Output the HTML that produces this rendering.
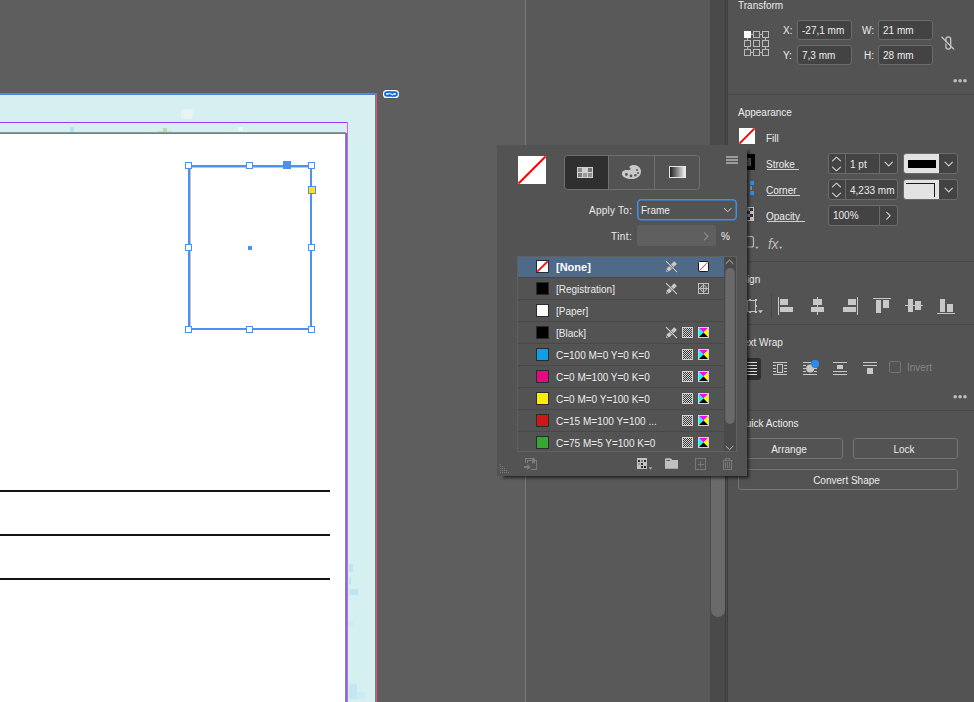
<!DOCTYPE html>
<html lang="en">
<head>
<meta charset="utf-8">
<title>InDesign – Swatches</title>
<style>
*{box-sizing:border-box;margin:0;padding:0}
html,body{width:974px;height:702px;overflow:hidden}
body{position:relative;background:#5e5e5e;font-family:"Liberation Sans",sans-serif;font-size:10px;color:#ececec;line-height:12px}
.abs{position:absolute}
.t{position:absolute;white-space:nowrap;line-height:12px;height:12px}
svg{position:absolute;overflow:visible}
/* canvas */
#bleed{left:0;top:95px;width:375px;height:607px;background:#d6eff0}
#page{left:0;top:134px;width:345px;height:568px;background:#fff}
.h{position:absolute;width:7px;height:7px;background:#fff;border:1px solid #4a90f5}
/* dock */
#dock{left:526px;top:0;width:184px;height:702px;background:#595959}
#track{left:710px;top:0;width:15px;height:702px;background:#4a4a4a}
#thumb{left:711px;top:150px;width:14px;height:467px;background:#6a6a6a;border-radius:0 0 7px 7px}
/* right panel */
#panel{left:728px;top:0;width:246px;height:702px;background:#535353}
.sep{position:absolute;left:728px;width:246px;height:1px;background:#484848}
.fld{position:absolute;background:#434343;border:1px solid #6b6b6b;border-radius:3px}
.btn{position:absolute;padding-right:3px;border:1px solid #747474;border-radius:3px;text-align:center;line-height:21px;height:21px}
.u{text-decoration:none}
.ul{position:absolute;height:1px;background:#d0d0d0}
/* popup */
#pop{left:497px;top:145px;width:250px;height:331px;background:#535353;box-shadow:4px 4px 3px -2px rgba(0,0,0,.62)}
.row{position:absolute;left:518px;width:206px;height:22px;border-bottom:1px solid #484848}
.sw{position:absolute;left:536px;width:13px;height:13px;border:1px solid #2b2b2b}
</style>
</head>
<body>
<!-- ================= CANVAS ================= -->
<div class="abs" id="bleed"></div>
<div class="abs" style="left:0;top:93px;width:377px;height:1px;background:#f0506a"></div>
<div class="abs" style="left:0;top:94px;width:376px;height:1px;background:#4a86e0"></div>
<div class="abs" style="left:375px;top:94px;width:1px;height:608px;background:#6f7f86"></div>
<div class="abs" style="left:376px;top:93px;width:1px;height:609px;background:#f0506a"></div>
<div class="abs" style="left:0;top:122px;width:348px;height:1px;background:#9a3cf2"></div>
<div class="abs" style="left:347px;top:122px;width:1px;height:580px;background:#f54cf5"></div>
<div class="abs" style="left:0;top:132px;width:346px;height:1px;background:#8c9a9c"></div>
<div class="abs" style="left:0;top:133px;width:347px;height:1px;background:#4a86e0"></div>
<div class="abs" style="left:346px;top:133px;width:1px;height:569px;background:#4a86e0"></div>
<div class="abs" id="page"></div>
<div class="abs" style="left:345px;top:134px;width:1px;height:568px;background:#8a8a8a"></div>
<!-- faint preview artefacts in bleed area -->
<div class="abs" style="left:181px;top:109px;width:12px;height:10px;background:#e6f5f4;border-radius:3px"></div>
<div class="abs" style="left:70px;top:127px;width:4px;height:5px;background:#b9e0ef"></div>
<div class="abs" style="left:157px;top:131px;width:15px;height:1px;background:#c6e0d2"></div>
<div class="abs" style="left:163px;top:128px;width:4px;height:4px;background:#bad6ba"></div>
<div class="abs" style="left:238px;top:127px;width:5px;height:4px;background:#ecf8f7"></div>
<div class="abs" style="left:349px;top:564px;width:4px;height:8px;background:#bfe3f2"></div>
<div class="abs" style="left:349px;top:577px;width:2px;height:7px;background:#bfe3f2"></div>
<div class="abs" style="left:349px;top:589px;width:9px;height:6px;background:#c2e5f2"></div>
<div class="abs" style="left:349px;top:622px;width:4px;height:5px;background:#cdebf3"></div>
<div class="abs" style="left:349px;top:684px;width:8px;height:15px;background:#c4e6f3"></div>
<div class="abs" style="left:357px;top:692px;width:8px;height:7px;background:#cdebf3"></div>
<!-- ruled lines -->
<div class="abs" style="left:0;top:490px;width:330px;height:2px;background:#141414"></div>
<div class="abs" style="left:0;top:534px;width:330px;height:2px;background:#141414"></div>
<div class="abs" style="left:0;top:578px;width:330px;height:2px;background:#141414"></div>
<!-- selected frame -->
<div class="abs" style="left:188px;top:165px;width:124px;height:165px;border:2px solid #4a90f5;box-shadow:1px 1px 0 rgba(170,150,120,.55) inset"></div>
<div class="h" style="left:185px;top:162px"></div>
<div class="h" style="left:246px;top:162px"></div>
<div class="h" style="left:308px;top:162px"></div>
<div class="h" style="left:185px;top:244px"></div>
<div class="h" style="left:308px;top:244px"></div>
<div class="h" style="left:185px;top:326px"></div>
<div class="h" style="left:246px;top:326px"></div>
<div class="h" style="left:308px;top:326px"></div>
<div class="abs" style="left:283px;top:161px;width:8px;height:8px;background:#4a90f5"></div>
<div class="abs" style="left:308px;top:186px;width:8px;height:8px;background:#ffe01a;border:1px solid #4a90f5"></div>
<div class="abs" style="left:248px;top:246px;width:4px;height:4px;background:#4a90f5"></div>
<!-- link badge -->
<svg style="left:0;top:0" width="420" height="110" viewBox="0 0 420 110">
<rect x="382.400" y="89.400" width="17.200" height="9.200" rx="4.600" fill="#4a4a4a" opacity=".55"/>
<rect x="383" y="90" width="16" height="8" rx="3.600" fill="#fff"/>
<rect x="385" y="92.100" width="6.600" height="3.800" rx="1.900" fill="#cfe0f7" stroke="#0d66e0" stroke-width="1.700"/>
<rect x="390.400" y="92.100" width="6.600" height="3.800" rx="1.900" fill="#cfe0f7" stroke="#0d66e0" stroke-width="1.700"/>
<path d="M388.800 91.900C390.800 91.900 391.600 93.200 393.400 93.400" stroke="#0d66e0" stroke-width="1.600" fill="none"/><path d="M388.600 94.600C390.600 94.800 391.200 96.100 393.200 96.100" stroke="#0d66e0" stroke-width="1.600" fill="none"/><path d="M389.600 93.300L392.600 94.900" stroke="#dbe8fa" stroke-width="1.100" stroke-linecap="round"/>
</svg>

<!-- ================= DOCK GAP + SCROLLBAR ================= -->
<div class="abs" style="left:525px;top:0;width:1px;height:702px;background:#7a7a7a"></div>
<div class="abs" id="dock"></div>
<div class="abs" id="track"></div>
<div class="abs" id="thumb"></div>
<div class="abs" style="left:725px;top:0;width:1px;height:702px;background:#3b3b3b"></div>
<div class="abs" style="left:726px;top:0;width:1px;height:702px;background:#4e4e4e"></div>
<div class="abs" style="left:727px;top:0;width:1px;height:702px;background:#3d3d3d"></div>

<!-- ================= RIGHT PANEL ================= -->
<div class="abs" id="panel"></div>
<!--PANEL-START-->
<div class="sep" style="top:94px"></div>
<div class="sep" style="top:261px"></div>
<div class="sep" style="top:324px"></div>
<div class="sep" style="top:410px"></div>
<!-- Transform -->
<span class="t" style="left:738px;top:0px">Transform</span>
<span class="t" style="left:783px;top:25px">X:</span>
<span class="t" style="left:783px;top:50px">Y:</span>
<span class="t" style="left:862px;top:25px">W:</span>
<span class="t" style="left:864px;top:50px">H:</span>
<div class="fld" style="left:797px;top:20px;width:55px;height:20px"></div>
<div class="fld" style="left:797px;top:45px;width:55px;height:20px"></div>
<div class="fld" style="left:878px;top:20px;width:55px;height:20px"></div>
<div class="fld" style="left:878px;top:45px;width:55px;height:20px"></div>
<span class="t" style="left:802px;top:25px">-27,1 mm</span>
<span class="t" style="left:802px;top:50px">7,3 mm</span>
<span class="t" style="left:883px;top:25px">21 mm</span>
<span class="t" style="left:883px;top:50px">28 mm</span>
<!-- Appearance -->
<span class="t" style="left:738px;top:107px">Appearance</span>
<span class="t" style="left:766px;top:133px">Fill</span>
<span class="t" style="left:766px;top:159px">Stroke</span>
<div class="ul" style="left:767px;top:169px;width:32px"></div>
<span class="t" style="left:766px;top:185px">Corner</span>
<div class="ul" style="left:767px;top:195px;width:33px"></div>
<span class="t" style="left:766px;top:211px">Opacity</span>
<div class="ul" style="left:767px;top:221px;width:38px"></div>
<!-- stroke weight -->
<div class="fld" style="left:828px;top:153px;width:70px;height:21px"></div>
<div class="abs" style="left:845px;top:154px;width:1px;height:19px;background:#6b6b6b"></div>
<div class="abs" style="left:879px;top:154px;width:1px;height:19px;background:#6b6b6b"></div>
<span class="t" style="left:850px;top:159px">1 pt</span>
<!-- stroke type -->
<div class="fld" style="left:903px;top:153px;width:55px;height:21px;overflow:hidden"><div style="position:absolute;left:0;top:0;width:35px;height:19px;background:#e3e3e3"></div><div style="position:absolute;left:4px;top:6px;width:28px;height:8px;background:#000"></div></div>
<!-- corner size -->
<div class="fld" style="left:828px;top:179px;width:70px;height:21px"></div>
<div class="abs" style="left:845px;top:180px;width:1px;height:19px;background:#6b6b6b"></div>
<span class="t" style="left:850px;top:185px">4,233 mm</span>
<!-- corner shape -->
<div class="fld" style="left:903px;top:179px;width:55px;height:21px;overflow:hidden"><div style="position:absolute;left:0;top:0;width:35px;height:19px;background:#e3e3e3"></div><div style="position:absolute;left:2px;top:3px;width:29px;height:14px;border-top:1.5px solid #1a1a1a;border-right:1.5px solid #1a1a1a"></div></div>
<!-- opacity -->
<div class="fld" style="left:828px;top:205px;width:70px;height:21px"></div>
<div class="abs" style="left:879px;top:206px;width:1px;height:19px;background:#6b6b6b"></div>
<span class="t" style="left:833px;top:210px">100%</span>
<!-- Align / Text wrap / quick actions -->
<span class="t" style="left:738px;top:274px">Align</span>
<span class="t" style="left:738px;top:337px">Text Wrap</span>
<div class="abs" style="left:738px;top:358px;width:23px;height:22px;background:#2f2f2f;border-radius:3px"></div>
<div class="abs" style="left:889px;top:361px;width:12px;height:12px;border:1px solid #747474;border-radius:2px"></div>
<span class="t" style="left:907px;top:362px;color:#858585">Invert</span>
<span class="t" style="left:738px;top:418px">Quick Actions</span>
<div class="btn" style="left:738px;top:438px;width:105px">Arrange</div>
<div class="btn" style="left:853px;top:438px;width:105px">Lock</div>
<div class="btn" style="left:738px;top:469px;width:220px">Convert Shape</div>
<svg style="left:0;top:0" width="974" height="702" viewBox="0 0 974 702" fill="none">
<!-- fill swatch -->
<rect x="739" y="128" width="16" height="16" fill="#fff"/>
<path d="M739.400 143.600L754.600 128.400" stroke="#f00" stroke-width="2"/>
<!-- stroke swatch (partly hidden) -->
<rect x="741" y="156" width="12" height="12" stroke="#000" stroke-width="4"/>
<!-- ref point -->
<g stroke="#b9b9b9" stroke-width="1" shape-rendering="crispEdges">
<rect x="744.5" y="31.5" width="6" height="6" fill="#fff" stroke="#fff"/>
<rect x="753.5" y="31.5" width="6" height="6"/><rect x="762.5" y="31.5" width="6" height="6"/>
<rect x="744.5" y="40.5" width="6" height="6"/><rect x="753.5" y="40.5" width="6" height="6"/><rect x="762.5" y="40.5" width="6" height="6"/>
<rect x="744.5" y="49.5" width="6" height="6"/><rect x="753.5" y="49.5" width="6" height="6"/><rect x="762.5" y="49.5" width="6" height="6"/>
<path d="M751 34.5h2M760 34.5h2M751 52.5h2M760 52.5h2M747.5 38v2M747.5 47v2M765.5 38v2M765.5 47v2"/>
</g>
<!-- unlink -->
<g stroke="#c4c4c4" stroke-width="1.3" stroke-linecap="round">
<path d="M945.9 41.5v-2.3a2.4 2.4 0 0 1 4.8 0v7.6a2.4 2.4 0 0 1-4.8 0v-3"/>
<path d="M942 37.3L953.7 49"/>
</g>
<!-- more dots -->
<g fill="#bdbdbd"><circle cx="955.2" cy="80.7" r="1.8"/><circle cx="960.1" cy="80.7" r="1.8"/><circle cx="965" cy="80.7" r="1.8"/>
<circle cx="955.2" cy="396.7" r="1.8"/><circle cx="960.1" cy="396.7" r="1.8"/><circle cx="965" cy="396.7" r="1.8"/></g>
<!-- spinner + dropdown chevrons -->
<g stroke="#d6d6d6" stroke-width="1.1" stroke-linecap="round" stroke-linejoin="round">
<path d="M832.5 160.8l4-3.6 4 3.6M832.5 167.2l4 3.6 4-3.6"/>
<path d="M832.5 186.8l4-3.6 4 3.6M832.5 193.2l4 3.6 4-3.6"/>
<path d="M885 162.2l3.7 3.6 3.7-3.6"/>
<path d="M945 162.2l3.7 3.6 3.7-3.6"/>
<path d="M945 188.2l3.7 3.6 3.7-3.6"/>
<path d="M886.7 212.3l3.5 3.4-3.5 3.4"/>
</g>
<!-- corner icon -->
<rect x="750" y="181" width="4" height="4" fill="#2d8ceb"/><rect x="750" y="191" width="4" height="4" fill="#2d8ceb"/><rect x="750" y="186" width="2" height="4" fill="#8a8a8a"/>
<!-- opacity icon -->
<g shape-rendering="crispEdges"><rect x="745" y="207" width="9" height="14" fill="#c4c4c4"/><rect x="745" y="208" width="8" height="12" fill="#8a8a8a"/>
<rect x="750" y="208" width="3" height="3" fill="#333"/><rect x="747" y="211" width="3" height="3" fill="#333"/><rect x="750" y="211" width="3" height="3" fill="#c4c4c4"/><rect x="750" y="214" width="3" height="3" fill="#333"/><rect x="747" y="217" width="3" height="3" fill="#333"/><rect x="750" y="217" width="3" height="3" fill="#c4c4c4"/></g>
<!-- object effects icon -->
<path d="M747 236.5h4.5a2 2 0 0 1 2 2v6.500a2 2 0 0 1-2 2H747" stroke="#b9b9b9" stroke-width="1.2"/>
<path d="M755.2 246.800h3.400l-1.700 2.200z" fill="#b9b9b9"/>
<path d="M779 246.800h3.400l-1.700 2.200z" fill="#b9b9b9"/>
<!-- align-to icon -->
<g shape-rendering="crispEdges"><rect x="747.500" y="300.500" width="8" height="11" stroke="#c4c4c4"/>
<g fill="#c4c4c4"><rect x="749" y="299" width="2" height="2"/><rect x="755" y="299" width="2" height="2"/><rect x="755" y="305" width="2" height="2"/><rect x="749" y="311" width="2" height="2"/><rect x="755" y="311" width="2" height="2"/></g></g>
<path d="M758 310.300h5l-2.500 3z" fill="#c4c4c4"/>
<rect x="771" y="294" width="1" height="24" fill="#474747"/>
<!-- align icons -->
<g fill="#c8c8c8" shape-rendering="crispEdges">
<rect x="778" y="297" width="1" height="18"/><rect x="780" y="299" width="8" height="6"/><rect x="780" y="307" width="13" height="5"/>
<rect x="817" y="297" width="1" height="18"/><rect x="813" y="299" width="9" height="6"/><rect x="811" y="307" width="13" height="5"/>
<rect x="857" y="297" width="1" height="18"/><rect x="848" y="299" width="8" height="6"/><rect x="843" y="307" width="13" height="5"/>
<rect x="873" y="298" width="18" height="1"/><rect x="876" y="300" width="5" height="13"/><rect x="883" y="300" width="6" height="8"/>
<rect x="905" y="305" width="18" height="1"/><rect x="908" y="299" width="5" height="13"/><rect x="915" y="301" width="6" height="9"/>
<rect x="937" y="313" width="18" height="1"/><rect x="940" y="299" width="5" height="13"/><rect x="947" y="304" width="6" height="8"/>
</g>
<!-- text wrap icons -->
<g fill="#dcdcdc" shape-rendering="crispEdges">
<rect x="745" y="362" width="12" height="1"/><rect x="745" y="365" width="12" height="1"/><rect x="745" y="368" width="12" height="1"/><rect x="745" y="371" width="12" height="1"/><rect x="745" y="374" width="12" height="1"/>
</g>
<g fill="#c8c8c8" shape-rendering="crispEdges">
<rect x="773" y="362" width="14" height="1"/><rect x="773" y="374" width="14" height="1"/>
<rect x="773" y="365" width="3" height="1"/><rect x="773" y="368" width="3" height="1"/><rect x="773" y="371" width="3" height="1"/>
<rect x="784" y="365" width="3" height="1"/><rect x="784" y="368" width="3" height="1"/><rect x="784" y="371" width="3" height="1"/>
<rect x="803" y="362" width="8" height="1"/><rect x="803" y="365" width="3" height="1"/><rect x="803" y="368" width="3" height="1"/><rect x="803" y="371" width="3" height="1"/><rect x="803" y="374" width="14" height="1"/>
<rect x="814" y="368" width="3" height="1"/><rect x="814" y="371" width="3" height="1"/>
<rect x="833" y="362" width="14" height="1"/><rect x="833" y="371" width="14" height="1"/><rect x="833" y="374" width="14" height="1"/><rect x="837" y="365" width="6" height="4"/>
<rect x="863" y="362" width="14" height="1"/><rect x="863" y="365" width="14" height="1"/><rect x="867" y="368" width="6" height="6"/>
</g>
<rect x="777.500" y="364.500" width="5" height="8" stroke="#c8c8c8" shape-rendering="crispEdges"/>
<circle cx="810.200" cy="368.600" r="4" fill="#c8c8c8"/>
<circle cx="815.100" cy="364" r="4" fill="#2d8ceb"/>
</svg>
<span class="t" style="left:768px;top:237px;font-style:italic;font-size:14px;line-height:14px;height:14px;color:#b9b9b9;letter-spacing:-0.5px">fx</span>
<!--PANEL-END-->

<!-- ================= SWATCHES POPUP ================= -->
<div class="abs" id="pop"></div>
<!--POPUP-START-->
<!-- fill proxy -->
<svg style="left:0;top:0" width="974" height="702" viewBox="0 0 974 702" fill="none">
<pattern id="dots" width="2" height="2" patternUnits="userSpaceOnUse"><rect width="2" height="2" fill="#d2d2d2"/><rect width="1" height="1" fill="#383838"/><rect x="1" y="1" width="1" height="1" fill="#383838"/></pattern>
<linearGradient id="gr" x1="0" x2="1" y1="0" y2="0"><stop offset="0" stop-color="#1a1a1a"/><stop offset="1" stop-color="#fafafa"/></linearGradient>
<rect x="518" y="156" width="28" height="28" fill="#fff"/>
<path d="M518.500 183.500L545.500 156.500" stroke="#f00" stroke-width="2"/>
<!-- mode buttons -->
<path d="M567.500 155.500h40.500v34h-40.500a3 3 0 0 1-3-3v-28a3 3 0 0 1 3-3z" fill="#2f2f2f"/>
<rect x="564.500" y="155.500" width="135" height="34" rx="3" stroke="#707070"/>
<path d="M608.500 156v33M654.500 156v33" stroke="#707070"/>
<g shape-rendering="crispEdges"><rect x="577" y="167" width="16" height="11" fill="#d0d0d0"/>
<rect x="578" y="168" width="4" height="4" fill="#8a8a8a"/><rect x="588" y="168" width="4" height="4" fill="#777"/>
<rect x="578" y="173" width="4" height="4" fill="#7c7c7c"/><rect x="583" y="173" width="4" height="4" fill="#9a9a9a"/><rect x="588" y="173" width="4" height="4" fill="#8f8f8f"/></g>
<path d="M629.300 166.800C630.500 165.300 632.500 164.800 634.500 165C638.500 165.400 641.200 168.300 641 171.700C640.800 174.500 639.500 176.300 637.500 177.500C635.700 178.600 633.500 179.200 631.300 179.100C628.500 179 626 178.500 624.300 177.300C622.700 176.200 621.700 174.800 621.900 173.200C622.100 171.700 623.200 170.700 624.800 170.300C626.300 169.900 627.800 170.300 629.200 170.100C630.300 169.900 630.800 169.200 630.500 168.500C630.300 167.900 629 167.400 629.300 166.800z" fill="#c8c8c8"/>
<g fill="#575757"><circle cx="637" cy="169.900" r="1"/><circle cx="638" cy="173" r="1"/><circle cx="635.400" cy="175.300" r="1.200"/><circle cx="631" cy="175.900" r="1.400"/><circle cx="626.400" cy="174.500" r="1.400"/></g>
<rect x="669.500" y="166.500" width="16" height="11" fill="url(#gr)" stroke="#e6e6e6"/>
<g fill="#9c9c9c" shape-rendering="crispEdges"><rect x="726" y="156" width="12" height="2"/><rect x="726" y="159" width="12" height="2"/><rect x="726" y="162" width="12" height="2"/></g>
<!-- apply-to dropdown -->
<rect x="637.750" y="199.750" width="98.500" height="20" rx="3.500" stroke="#3d8fea" stroke-width="1.500"/>
<path d="M724.300 208.300l3.400 3.500 3.400-3.500" stroke="#d0d0d0" stroke-width="1" stroke-linecap="round" stroke-linejoin="round"/>
<rect x="637" y="225" width="79" height="21" rx="2" fill="#5f5f5f"/>
<path d="M704.500 232.800l3.500 3.500-3.500 3.500" stroke="#8d8d8d" stroke-width="1.100" stroke-linecap="round" stroke-linejoin="round"/>
<!-- list frame -->
<rect x="517.500" y="256.500" width="219" height="195" fill="#535353" stroke="#606060"/>
<rect x="518" y="257" width="206" height="20" fill="#4e6a88"/>
<rect x="724" y="257" width="12" height="194" fill="#4a4a4a"/>
<rect x="725.300" y="268" width="9.400" height="156" rx="4.700" fill="#6a6a6a"/>
<path d="M726 263.500l3.500-3.400 3.500 3.400M726 446.300l3.500 3.400 3.500-3.400" stroke="#bdbdbd" stroke-width="1" stroke-linecap="round" stroke-linejoin="round"/>
<rect x="518" y="277" width="206" height="1" fill="#484848"/>
<rect x="536.500" y="260.5" width="12" height="12" fill="#fff" stroke="#2b2b2b"/><path d="M537.300 271.7L547.700 261.3" stroke="#f00" stroke-width="1.700"/>
<g transform="translate(665.700 261)"><path d="M0.400 10.900L1.300 7.300L8.600 0.300L11.200 3L3.900 10z" fill="#c9c9c9"/><path d="M1.100 8.700l1.700 1.700" stroke="#4a4a4a" stroke-width=".8"/><path d="M0.300 0.200L11.300 11.200" stroke="#4c4c4c" stroke-opacity=".75" stroke-width="2.600"/><path d="M0.300 0.200L11.300 11.200" stroke="#d4d4d4" stroke-width="1.100"/></g>
<rect x="698.500" y="261.5" width="10" height="10" rx="1" fill="#fff" stroke="#1a1a1a"/><path d="M699.300 270.7L707.700 262.3" stroke="#f22" stroke-width=".9"/>
<rect x="518" y="299" width="206" height="1" fill="#484848"/>
<rect x="536.500" y="282.5" width="12" height="12" fill="#000" stroke="#2b2b2b"/>
<g transform="translate(665.700 283)"><path d="M0.400 10.900L1.300 7.300L8.600 0.300L11.200 3L3.900 10z" fill="#c9c9c9"/><path d="M1.100 8.700l1.700 1.700" stroke="#4a4a4a" stroke-width=".8"/><path d="M0.300 0.200L11.300 11.200" stroke="#4c4c4c" stroke-opacity=".75" stroke-width="2.600"/><path d="M0.300 0.200L11.300 11.200" stroke="#d4d4d4" stroke-width="1.100"/></g>
<g stroke="#c0c0c0"><rect x="698.500" y="283.5" width="10" height="10" shape-rendering="crispEdges"/><path d="M703.500 283v11M698 288.5h11" shape-rendering="crispEdges"/><circle cx="703.500" cy="288.5" r="3"/></g>
<rect x="518" y="321" width="206" height="1" fill="#484848"/>
<rect x="536.500" y="304.5" width="12" height="12" fill="#fff" stroke="#2b2b2b"/>
<rect x="518" y="343" width="206" height="1" fill="#484848"/>
<rect x="536.500" y="326.5" width="12" height="12" fill="#000" stroke="#2b2b2b"/>
<g transform="translate(665.700 327)"><path d="M0.400 10.900L1.300 7.300L8.600 0.300L11.200 3L3.900 10z" fill="#c9c9c9"/><path d="M1.100 8.700l1.700 1.700" stroke="#4a4a4a" stroke-width=".8"/><path d="M0.300 0.200L11.300 11.200" stroke="#4c4c4c" stroke-opacity=".75" stroke-width="2.600"/><path d="M0.300 0.200L11.300 11.200" stroke="#d4d4d4" stroke-width="1.100"/></g>
<g transform="translate(682 327)"><rect width="11" height="11" fill="#d2d2d2"/><rect x="1" y="1" width="9" height="9" fill="url(#dots)"/></g><g transform="translate(698 327)"><rect width="11" height="11" fill="#d2d2d2"/><path d="M1 1h9L5.500 5.500z" fill="#f0f"/><path d="M1 1v9L5.500 5.500z" fill="#0ff"/><path d="M10 1v9L5.500 5.500z" fill="#ff0"/><path d="M1 10h9L5.500 5.500z" fill="#000"/></g>
<rect x="518" y="365" width="206" height="1" fill="#484848"/>
<rect x="536.500" y="348.5" width="12" height="12" fill="#0a9fe6" stroke="#2b2b2b"/>
<g transform="translate(682 349)"><rect width="11" height="11" fill="#d2d2d2"/><rect x="1" y="1" width="9" height="9" fill="url(#dots)"/></g><g transform="translate(698 349)"><rect width="11" height="11" fill="#d2d2d2"/><path d="M1 1h9L5.500 5.500z" fill="#f0f"/><path d="M1 1v9L5.500 5.500z" fill="#0ff"/><path d="M10 1v9L5.500 5.500z" fill="#ff0"/><path d="M1 10h9L5.500 5.500z" fill="#000"/></g>
<rect x="518" y="387" width="206" height="1" fill="#484848"/>
<rect x="536.500" y="370.5" width="12" height="12" fill="#e6087f" stroke="#2b2b2b"/>
<g transform="translate(682 371)"><rect width="11" height="11" fill="#d2d2d2"/><rect x="1" y="1" width="9" height="9" fill="url(#dots)"/></g><g transform="translate(698 371)"><rect width="11" height="11" fill="#d2d2d2"/><path d="M1 1h9L5.500 5.500z" fill="#f0f"/><path d="M1 1v9L5.500 5.500z" fill="#0ff"/><path d="M10 1v9L5.500 5.500z" fill="#ff0"/><path d="M1 10h9L5.500 5.500z" fill="#000"/></g>
<rect x="518" y="409" width="206" height="1" fill="#484848"/>
<rect x="536.500" y="392.5" width="12" height="12" fill="#ffed00" stroke="#2b2b2b"/>
<g transform="translate(682 393)"><rect width="11" height="11" fill="#d2d2d2"/><rect x="1" y="1" width="9" height="9" fill="url(#dots)"/></g><g transform="translate(698 393)"><rect width="11" height="11" fill="#d2d2d2"/><path d="M1 1h9L5.500 5.500z" fill="#f0f"/><path d="M1 1v9L5.500 5.500z" fill="#0ff"/><path d="M10 1v9L5.500 5.500z" fill="#ff0"/><path d="M1 10h9L5.500 5.500z" fill="#000"/></g>
<rect x="518" y="431" width="206" height="1" fill="#484848"/>
<rect x="536.500" y="414.5" width="12" height="12" fill="#cf1719" stroke="#2b2b2b"/>
<g transform="translate(682 415)"><rect width="11" height="11" fill="#d2d2d2"/><rect x="1" y="1" width="9" height="9" fill="url(#dots)"/></g><g transform="translate(698 415)"><rect width="11" height="11" fill="#d2d2d2"/><path d="M1 1h9L5.500 5.500z" fill="#f0f"/><path d="M1 1v9L5.500 5.500z" fill="#0ff"/><path d="M10 1v9L5.500 5.500z" fill="#ff0"/><path d="M1 10h9L5.500 5.500z" fill="#000"/></g>
<rect x="536.500" y="436.5" width="12" height="12" fill="#3aa535" stroke="#2b2b2b"/>
<g transform="translate(682 437)"><rect width="11" height="11" fill="#d2d2d2"/><rect x="1" y="1" width="9" height="9" fill="url(#dots)"/></g><g transform="translate(698 437)"><rect width="11" height="11" fill="#d2d2d2"/><path d="M1 1h9L5.500 5.500z" fill="#f0f"/><path d="M1 1v9L5.500 5.500z" fill="#0ff"/><path d="M10 1v9L5.500 5.500z" fill="#ff0"/><path d="M1 10h9L5.500 5.500z" fill="#000"/></g>
<!-- list bottom clip + footer -->
<rect x="517" y="452" width="221" height="5" fill="#535353"/>
<rect x="517" y="451" width="220" height="1" fill="#606060"/>
<!-- footer icons -->
<g fill="#7a7a7a" shape-rendering="crispEdges">
<rect x="500" y="464" width="1" height="1"/>
<rect x="500" y="466" width="1" height="1"/><rect x="502" y="466" width="1" height="1"/>
<rect x="500" y="468" width="1" height="1"/><rect x="502" y="468" width="1" height="1"/><rect x="504" y="468" width="1" height="1"/>
<rect x="500" y="470" width="1" height="1"/><rect x="502" y="470" width="1" height="1"/><rect x="504" y="470" width="1" height="1"/><rect x="506" y="470" width="1" height="1"/>
<rect x="500" y="472" width="1" height="1"/><rect x="502" y="472" width="1" height="1"/><rect x="504" y="472" width="1" height="1"/><rect x="506" y="472" width="1" height="1"/><rect x="508" y="472" width="1" height="1"/>
</g>
<g stroke="#7c7c7c" fill="none" shape-rendering="crispEdges"><path d="M525.500 463v-4.500h9.500"/><path d="M527.500 463v-2.500h9v9h-5.500"/></g>
<path d="M532 459h3v5l-1.500-1.500-1.500 1.500z" fill="#7c7c7c"/>
<path d="M524 466h3.300v-2l3.400 3.100-3.400 3.100v-2.200H524z" fill="#7c7c7c"/>
<g shape-rendering="crispEdges"><rect x="637" y="458" width="10" height="11" fill="#c2c2c2"/>
<rect x="638" y="460" width="2" height="2" fill="#2e2e2e"/><rect x="641" y="460" width="2" height="2" fill="#777"/><rect x="644" y="460" width="2" height="2" fill="#333"/>
<rect x="638" y="463" width="2" height="2" fill="#999"/><rect x="641" y="463" width="2" height="2" fill="#333"/>
<rect x="641" y="466" width="2" height="2" fill="#333"/><rect x="644" y="466" width="2" height="2" fill="#222"/></g>
<path d="M648.800 467.200h3.400l-1.700 2.600z" fill="#b4b4b4"/>
<path d="M665 459.200a1 1 0 0 1 1-1h4a1.500 1.500 0 0 1 1.200.600l1 1.200h5.800v8.800h-13z" fill="#c0c0c0"/>
<rect x="666.400" y="460" width="3.600" height="1" fill="#5a5a5a"/>
<g stroke="#787878" shape-rendering="crispEdges"><rect x="695.500" y="458.500" width="10" height="11"/><path d="M700.500 461v6M697.500 464.500h6"/></g>
<g stroke="#787878" shape-rendering="crispEdges"><path d="M722.500 460.500h10M725.500 460v-1.500h4v1.500"/><path d="M723.500 461v8.500h8V461"/><path d="M725.500 462v6M727.500 462v6M729.500 462v6"/></g>
</svg>
<span class="t" style="left:556px;top:261px;font-weight:bold;font-size:11px;color:#fff">[None]</span>
<span class="t" style="left:556px;top:284px;">[Registration]</span>
<span class="t" style="left:556px;top:306px;">[Paper]</span>
<span class="t" style="left:556px;top:328px;">[Black]</span>
<span class="t" style="left:556px;top:350px;">C=100 M=0 Y=0 K=0</span>
<span class="t" style="left:556px;top:372px;">C=0 M=100 Y=0 K=0</span>
<span class="t" style="left:556px;top:394px;">C=0 M=0 Y=100 K=0</span>
<span class="t" style="left:556px;top:416px;">C=15 M=100 Y=100 ...</span>
<span class="t" style="left:556px;top:438px;">C=75 M=5 Y=100 K=0</span>
<span class="t" style="left:589px;top:205px;letter-spacing:.25px">Apply To:</span>
<span class="t" style="left:641px;top:205px">Frame</span>
<span class="t" style="left:611px;top:231px;letter-spacing:.4px">Tint:</span>
<span class="t" style="left:721px;top:231px">%</span>
<!--POPUP-END-->
</body>
</html>
